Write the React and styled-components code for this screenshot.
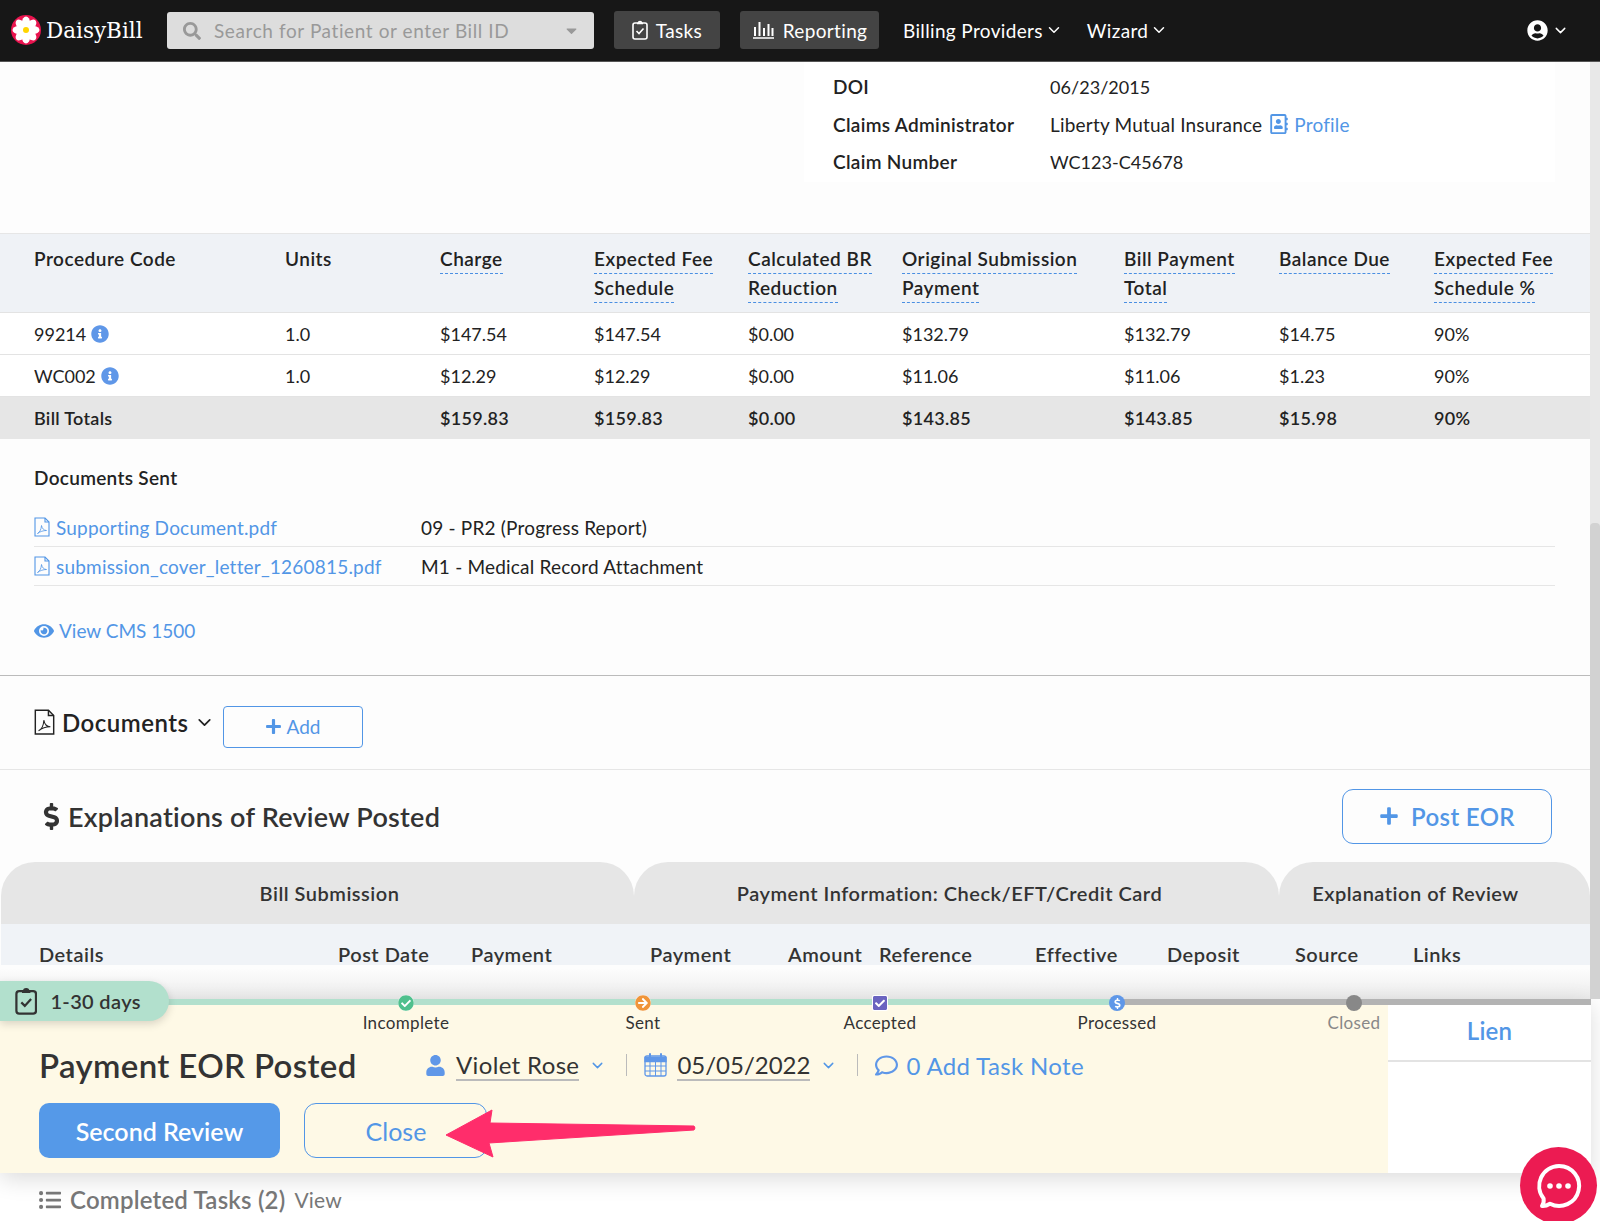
import React from 'react'
import styled, { createGlobalStyle } from 'styled-components'
import {
  FaSearch, FaCaretDown, FaEye, FaPlus, FaUser, FaRegComment,
  FaInfoCircle, FaListUl, FaUserCircle, FaCheckCircle, FaArrowCircleRight,
  FaCheckSquare, FaDollarSign, FaRegAddressBook
} from 'react-icons/fa'
import { LuChevronDown } from 'react-icons/lu'

const blue = '#5296e6'
const font = 'Lato, "Open Sans", sans-serif'

const Global = createGlobalStyle`
  html, body { margin: 0; padding: 0; background: #fff; }
  body {
    font-family: ${font};
    font-size: 19px;
    color: #222;
    letter-spacing: 0.2px;
  }
  * { box-sizing: border-box; }
`

const Frame = styled.div`
  width: 1600px;
  height: 100vh;
  display: flex;
  flex-direction: column;
  overflow: hidden;
`

const Header = styled.header`
  flex: none;
  height: 62px;
  display: flex;
  align-items: center;
  padding: 0 31px 1px 11px;
  background: #171717;
  border-bottom: 1px solid #555;
  color: #fff;
  letter-spacing: 0.35px;
`
const Logo = styled.div`
  width: 156px;
  display: flex;
  align-items: center;
  gap: 5px;
  font-family: "DejaVu Serif", serif;
  font-size: 21.5px;
  letter-spacing: 0;
`
const Search = styled.div`
  width: 427px;
  height: 37px;
  display: flex;
  align-items: center;
  padding: 1px 14px 0 16px;
  background: #ddd;
  border-radius: 3px;
  color: #999;
  letter-spacing: 0.6px;
  svg:first-child { font-size: 18px; margin-right: 13px; }
  svg:last-child { margin-left: auto; font-size: 17px; }
`
const NavButton = styled.div`
  width: ${p => p.$w}px;
  height: 38px;
  margin-left: 20px;
  display: flex;
  align-items: center;
  justify-content: center;
  gap: 8px;
  background: #444;
  border-radius: 3px;
`
const NavLink = styled.div`
  margin-left: ${p => p.$ml}px;
  display: flex;
  align-items: center;
  gap: 2px;
  svg { font-size: 18px; }
`
const UserMenu = styled.div`
  margin-left: auto;
  display: flex;
  align-items: center;
  gap: 4px;
  svg:first-child { font-size: 21px; }
  svg:last-child { font-size: 17px; }
`

const Content = styled.div`
  flex: none;
  height: 903px;
  display: flex;
  overflow: hidden;
  background: #fdfdfd;
`
const Main = styled.main`
  width: 1590px;
  flex: none;
`
const ScrollTrack = styled.div`
  width: 10px;
  flex: none;
  display: flex;
  flex-direction: column;
  background: #e8e8e8;
`
const ScrollThumb = styled.div`
  margin-top: 461px;
  flex: 1;
  background: #d2d2d2;
  border-radius: 4px 4px 0 0;
`

const TopBlock = styled.div`
  height: 171px;
  padding-left: 804px;
`
const InfoCard = styled.div`
  width: 751px;
  height: 120px;
  padding: 6px 0 0 29px;
  background: #fff;
`
const InfoRow = styled.div`
  height: 37.5px;
  display: flex;
  align-items: center;
`
const InfoLabel = styled.div`
  width: 217px;
  font-weight: 600;
  letter-spacing: 0.3px;
`
const Num = styled.span`
  font-size: 18px;
  letter-spacing: 0.05px;
`
const InlineLink = styled.span`
  display: inline-flex;
  align-items: center;
  gap: 5px;
  margin-left: 7px;
  color: ${blue};
  svg { font-size: 20px; }
`

const Row = styled.div`
  display: grid;
  grid-template-columns: 251px 155px 154px 154px 154px 222px 155px 155px 1fr;
  padding-left: 34px;
  align-items: center;
  height: 42px;
  background: #fff;
  border-bottom: 1px solid #e3e3e3;
  font-size: 18px;
  letter-spacing: 0;
`
const HeadRow = styled(Row)`
  height: 80px;
  align-items: start;
  padding-top: 10px;
  line-height: 29px;
  background: #eff2f6;
  border-top: 1px solid #e6e6e6;
  font-size: 19px;
  font-weight: 600;
  letter-spacing: 0.5px;
`
const TotalRow = styled(Row)`
  background: #e6e6e6;
  border-bottom: none;
  font-weight: 600;
  letter-spacing: 0.3px;
`
const Dashed = styled.span`
  padding-bottom: 3px;
  border-bottom: 1px dashed #4a8fe2;
`
const CodeCell = styled.div`
  display: flex;
  align-items: center;
  gap: 5px;
  svg { color: #5f97e8; font-size: 18px; }
`

const DocsSent = styled.section`
  height: 237px;
  padding: 28px 35px 0 34px;
  border-bottom: 1px solid #bbb;
`
const DocsLabel = styled.div`
  font-weight: 600;
  letter-spacing: 0.3px;
  margin-bottom: 19px;
  line-height: 22px;
`
const DocRow = styled.div`
  height: 39px;
  display: flex;
  align-items: center;
  border-bottom: 1px solid #e6e6e6;
`
const DocLink = styled.div`
  width: 387px;
  display: flex;
  align-items: center;
  gap: 6px;
  color: ${blue};
`
const ViewLink = styled.div`
  margin-top: 33px;
  display: flex;
  align-items: center;
  gap: 5px;
  color: ${blue};
  letter-spacing: 0;
  svg { font-size: 20px; }
`

const DocsBar = styled.section`
  height: 94px;
  padding: 0 0 0 34px;
  display: flex;
  align-items: center;
  border-bottom: 1px solid #e6e6e6;
`
const BarTitle = styled.h2`
  margin: 0;
  display: flex;
  align-items: center;
  gap: 7px;
  font-size: 24px;
  font-weight: 600;
  letter-spacing: 0.5px;
  color: #222;
  svg:last-child { font-size: 21px; margin-left: -2px; }
`
const AddButton = styled.button`
  width: 140px;
  height: 42px;
  margin: 8px 0 0 8px;
  display: flex;
  align-items: center;
  justify-content: center;
  gap: 5px;
  background: transparent;
  border: 1px solid ${blue};
  border-radius: 4px;
  color: ${blue};
  font: 400 19px ${font};
  svg { font-size: 17px; }
`

const EorBar = styled.section`
  height: 92px;
  padding: 0 38px 0 38px;
  display: flex;
  align-items: center;
  justify-content: space-between;
`
const EorTitle = styled.h2`
  margin: 0;
  display: flex;
  align-items: center;
  gap: 3px;
  font-size: 27px;
  font-weight: 600;
  letter-spacing: 0.25px;
  color: #333;
`
const PostButton = styled.button`
  width: 210px;
  height: 55px;
  display: flex;
  align-items: center;
  justify-content: center;
  gap: 12px;
  background: transparent;
  border: 1.5px solid ${blue};
  border-radius: 11px;
  color: ${blue};
  font: 600 24px ${font};
  letter-spacing: 0.35px;
  svg { font-size: 20px; }
`

const Groups = styled.div`
  display: flex;
  padding-left: 1px;
`
const Group = styled.div`
  width: ${p => p.$w}px;
  flex: none;
  & + & > div:last-child { border-left: 1px solid #d9d9d9; }
`
const GroupHead = styled.div`
  height: 62px;
  display: flex;
  align-items: center;
  justify-content: center;
  padding: 0 ${p => p.$r || 0}px 0 ${p => p.$l || 0}px;
  background: #e6e6e6;
  border-radius: 34px 34px 0 0;
  font-size: 20px;
  font-weight: 600;
  letter-spacing: 0.5px;
  color: #333;
`
const SubRow = styled.div`
  height: 60px;
  display: flex;
  padding: 18px 0 0 ${p => p.$l}px;
  background: #f0f3f7;
  font-size: 20px;
  font-weight: 600;
  letter-spacing: 0.5px;
  line-height: 24px;
  color: #333;
`
const SubCell = styled.div`
  width: ${p => p.$w}px;
  flex: none;
`

const Dock = styled.div`
  position: relative;
  flex: 1;
  background: #fff;
`
const Fade = styled.div`
  height: 34px;
  display: flex;
  justify-content: flex-end;
  background: linear-gradient(#fdfdfd 10%, #ececec);
`
const FadeTrack = styled.div`
  width: 10px;
  background: #d2d2d2;
`
const Panel = styled.div`
  width: 1591px;
  box-shadow: 0 6px 22px rgba(0, 0, 0, 0.14);
`
const Track = styled.div`
  height: 6px;
  background: linear-gradient(to right, #b2e0cd 1122px, #b3b3b3 1122px);
`
const PanelBody = styled.div`
  display: flex;
  height: 168px;
`
const TaskPane = styled.div`
  width: 1388px;
  padding: 0 0 15px 39px;
  background: #fef9e6;
`
const Stages = styled.div`
  height: 39px;
  margin-top: -10px;
  padding-left: 248.5px;
  display: flex;
  position: relative;
`
const Stage = styled.div`
  width: 237px;
  flex: none;
  display: flex;
  flex-direction: column;
  align-items: center;
  font-size: 17px;
  line-height: 22px;
  letter-spacing: 0.35px;
  color: ${p => p.$muted ? '#888' : '#333'};
`
const Dot = styled.div`
  width: 16px;
  height: 16px;
  flex: none;
  margin-bottom: 1px;
  display: flex;
  align-items: center;
  justify-content: center;
  border-radius: ${p => p.$square ? '2px' : '50%'};
  background: ${p => p.$bg};
  color: ${p => p.$fg};
  font-size: ${p => p.$size || 16}px;
`
const TitleRow = styled.div`
  height: 40px;
  margin-top: 11px;
  display: flex;
  align-items: center;
`
const TaskTitle = styled.h1`
  width: 386px;
  flex: none;
  margin: 0;
  font-size: 33px;
  font-weight: 600;
  letter-spacing: 0.35px;
  color: #333;
`
const Meta = styled.div`
  display: flex;
  align-items: center;
  gap: 10px;
  font-size: 24px;
  letter-spacing: ${p => p.$tight ? 0 : 0.35}px;
  color: #333;
  & > svg:first-child { color: #5f97e8; }
`
const Underlined = styled.span`
  border-bottom: 2px solid #bbb;
  line-height: 29px;
`
const Chevron = styled(LuChevronDown)`
  color: ${blue};
  font-size: 17px;
`
const Divider = styled.div`
  width: 1px;
  height: 22px;
  margin: 0 17px 0 20px;
  background: #bbb;
`
const NoteLink = styled(Meta)`
  gap: 8px;
  color: ${blue};
`
const Actions = styled.div`
  display: flex;
  gap: 24px;
  margin-top: 18px;
`
const PrimaryButton = styled.button`
  width: 241px;
  height: 55px;
  background: #5599e8;
  border: none;
  border-radius: 10px;
  color: #fff;
  font: 600 25px ${font};
`
const GhostButton = styled.button`
  width: 183px;
  height: 55px;
  padding-right: 5px;
  background: transparent;
  border: 1.5px solid ${blue};
  border-radius: 12px;
  color: ${blue};
  font: 400 25px ${font};
`
const LienPane = styled.div`
  flex: 1;
  height: 57px;
  display: flex;
  align-items: center;
  justify-content: center;
  padding-bottom: 4px;
  border-bottom: 2px solid #e3e3e3;
  color: ${blue};
  font-size: 24px;
  font-weight: 600;
`
const Completed = styled.div`
  height: 48px;
  padding: 5px 0 0 39px;
  display: flex;
  align-items: center;
  gap: 9px;
  color: #777;
  font-size: 24px;
  font-weight: 600;
  svg { font-size: 22px; }
  span { font-size: 21px; font-weight: 400; }
`
const Pill = styled.div`
  position: absolute;
  left: 0;
  top: 16px;
  width: 169px;
  height: 40px;
  padding-left: 15px;
  display: flex;
  align-items: center;
  gap: 13px;
  background: #b2e0cd;
  border-radius: 0 22px 22px 0;
  box-shadow: 0 3px 8px rgba(0, 0, 0, 0.15);
  font-size: 20px;
  font-weight: 600;
  letter-spacing: 0.35px;
  color: #333;
`
const Annotation = styled.svg`
  position: absolute;
  left: 440px;
  top: 140px;
`
const ChatBubble = styled.div`
  position: absolute;
  left: 1520px;
  top: 182px;
  width: 77px;
  height: 77px;
  display: flex;
  align-items: center;
  justify-content: center;
  border-radius: 50%;
  background: #ec1b52;
`

const Flower = () => (
  <svg width="30" height="30" viewBox="0 0 30 30">
    <circle cx="15" cy="15" r="15" fill="#e8134e" />
    {[0, 45, 90, 135, 180, 225, 270, 315].map(a => (
      <ellipse key={a} cx="15" cy="7.5" rx="4" ry="6" fill="#fff" transform={`rotate(${a} 15 15)`} />
    ))}
    <circle cx="15" cy="15" r="3" fill="#ffd500" />
  </svg>
)

const Clipboard = ({ size = 20 }) => (
  <svg width={size * 0.8} height={size} viewBox="0 0 16 20" fill="none" stroke="currentColor" strokeWidth="1.6">
    <rect x="1" y="3" width="14" height="16" rx="2" />
    <path d="M5 3.5h6M6.5 3c0-2 3-2 3 0" />
    <path d="M4.5 11l2.5 2.5 4.5-5" />
  </svg>
)

const Bars = () => (
  <svg width="23" height="20" viewBox="0 0 23 20" fill="none" stroke="currentColor" strokeWidth="2">
    <path d="M1 18h21" strokeWidth="1.5" />
    <path d="M3 16V7M7.5 16V2M12 16V8M16.5 16V4M20.5 16V8" />
  </svg>
)

const Calendar = () => (
  <svg width="23" height="24" viewBox="0 0 23 24" fill="none" stroke="#5f97e8" strokeWidth="1.3">
    <rect x="1" y="3" width="21" height="20" rx="2" />
    <path d="M1 4.5h21v4H1z" fill="#5f97e8" />
    <path d="M6 1v5M17 1v5" strokeWidth="2" strokeLinecap="round" />
    <path d="M1 13h21M1 18h21M6 8v15M11.5 8v15M17 8v15" strokeWidth="1" />
  </svg>
)

const PdfIcon = ({ w = 16 }) => (
  <svg width={w} height={w * 1.25} viewBox="0 0 16 20" fill="none" stroke="currentColor" strokeWidth="1.1" style={{ flex: 'none' }}>
    <path d="M1 1h10l4 4v14H1z" />
    <path d="M11 1v4h4" />
    <path d="M3.5 16.5c2-1 3.800-4 4-8 .5 3 2.500 5 5 5-3 0-6.500 1-9 3z" strokeWidth="0.8" />
  </svg>
)

const headers = [
  ['Charge'], ['Expected Fee', 'Schedule'], ['Calculated BR', 'Reduction'],
  ['Original Submission', 'Payment'], ['Bill Payment', 'Total'], ['Balance Due'],
  ['Expected Fee', 'Schedule %']
]
const rows = [
  { code: '99214', values: ['$147.54', '$147.54', '$0.00', '$132.79', '$132.79', '$14.75', '90%'] },
  { code: 'WC002', values: ['$12.29', '$12.29', '$0.00', '$11.06', '$11.06', '$1.23', '90%'] }
]
const totals = ['$159.83', '$159.83', '$0.00', '$143.85', '$143.85', '$15.98', '90%']

const App = () => (
  <Frame>
    <Global />
    <Header>
      <Logo><Flower />DaisyBill</Logo>
      <Search>
        <FaSearch />
        Search for Patient or enter Bill ID
        <FaCaretDown />
      </Search>
      <NavButton $w={106}><Clipboard />Tasks</NavButton>
      <NavButton $w={139}><Bars />Reporting</NavButton>
      <NavLink $ml={24}>Billing Providers <LuChevronDown /></NavLink>
      <NavLink $ml={24}>Wizard <LuChevronDown /></NavLink>
      <UserMenu><FaUserCircle /><LuChevronDown /></UserMenu>
    </Header>

    <Content>
      <Main>
        <TopBlock>
          <InfoCard>
            <InfoRow><InfoLabel>DOI</InfoLabel><Num>06/23/2015</Num></InfoRow>
            <InfoRow>
              <InfoLabel>Claims Administrator</InfoLabel>
              Liberty Mutual Insurance
              <InlineLink><FaRegAddressBook />Profile</InlineLink>
            </InfoRow>
            <InfoRow><InfoLabel>Claim Number</InfoLabel><Num>WC123-C45678</Num></InfoRow>
          </InfoCard>
        </TopBlock>

        <HeadRow>
          <div>Procedure Code</div>
          <div>Units</div>
          {headers.map(h => (
            <div key={h.join()}>
              <Dashed>{h[0]}</Dashed>
              {h[1] && <><br /><Dashed>{h[1]}</Dashed></>}
            </div>
          ))}
        </HeadRow>
        {rows.map(r => (
          <Row key={r.code}>
            <CodeCell>{r.code} <FaInfoCircle /></CodeCell>
            <div>1.0</div>
            {r.values.map((v, i) => <div key={i}>{v}</div>)}
          </Row>
        ))}
        <TotalRow>
          <div>Bill Totals</div>
          <div />
          {totals.map((v, i) => <div key={i}>{v}</div>)}
        </TotalRow>

        <DocsSent>
          <DocsLabel>Documents Sent</DocsLabel>
          <DocRow>
            <DocLink><PdfIcon />Supporting Document.pdf</DocLink>
            09 - PR2 (Progress Report)
          </DocRow>
          <DocRow>
            <DocLink><PdfIcon />submission_cover_letter_1260815.pdf</DocLink>
            M1 - Medical Record Attachment
          </DocRow>
          <ViewLink><FaEye />View CMS 1500</ViewLink>
        </DocsSent>

        <DocsBar>
          <BarTitle><PdfIcon w={21} />Documents<LuChevronDown /></BarTitle>
          <AddButton><FaPlus />Add</AddButton>
        </DocsBar>

        <EorBar>
          <EorTitle><FaDollarSign />Explanations of Review Posted</EorTitle>
          <PostButton><FaPlus />Post EOR</PostButton>
        </EorBar>

        <Groups>
          <Group $w={633}>
            <GroupHead $l={24}>Bill Submission</GroupHead>
            <SubRow $l={38}>
              <SubCell $w={299}>Details</SubCell>
              <SubCell $w={133}>Post Date</SubCell>
              <SubCell>Payment</SubCell>
            </SubRow>
          </Group>
          <Group $w={645}>
            <GroupHead $r={14}>Payment Information: Check/EFT/Credit Card</GroupHead>
            <SubRow $l={16}>
              <SubCell $w={138}>Payment</SubCell>
              <SubCell $w={91}>Amount</SubCell>
              <SubCell $w={156}>Reference</SubCell>
              <SubCell $w={132}>Effective</SubCell>
              <SubCell>Deposit</SubCell>
            </SubRow>
          </Group>
          <Group $w={311}>
            <GroupHead $r={38}>Explanation of Review</GroupHead>
            <SubRow $l={16}>
              <SubCell $w={118}>Source</SubCell>
              <SubCell>Links</SubCell>
            </SubRow>
          </Group>
        </Groups>
      </Main>
      <ScrollTrack><ScrollThumb /></ScrollTrack>
    </Content>

    <Dock>
      <Fade><FadeTrack /></Fade>
      <Panel>
        <Track />
        <PanelBody>
          <TaskPane>
            <Stages>
              <Stage>
                <Dot $bg="#fff" $fg="#4fc08d"><FaCheckCircle /></Dot>
                Incomplete
              </Stage>
              <Stage>
                <Dot $bg="#fff" $fg="#f0953a"><FaArrowCircleRight /></Dot>
                Sent
              </Stage>
              <Stage>
                <Dot $square $bg="#fff" $fg="#6a64c0"><FaCheckSquare /></Dot>
                Accepted
              </Stage>
              <Stage>
                <Dot $bg="#5f97e8" $fg="#fff" $size={11}><FaDollarSign /></Dot>
                Processed
              </Stage>
              <Stage $muted>
                <Dot $bg="#888" />
                Closed
              </Stage>
            </Stages>
            <TitleRow>
              <TaskTitle>Payment EOR Posted</TaskTitle>
              <Meta>
                <FaUser size={21} />
                <Underlined>Violet Rose</Underlined>
                <Chevron />
              </Meta>
              <Divider />
              <Meta $tight>
                <Calendar />
                <Underlined>05/05/2022</Underlined>
                <Chevron />
              </Meta>
              <Divider />
              <NoteLink><FaRegComment size={23} />0 Add Task Note</NoteLink>
            </TitleRow>
            <Actions>
              <PrimaryButton>Second Review</PrimaryButton>
              <GhostButton>Close</GhostButton>
            </Actions>
          </TaskPane>
          <LienPane>Lien</LienPane>
        </PanelBody>
      </Panel>
      <Completed>
        <FaListUl />Completed Tasks (2) <span>View</span>
      </Completed>

      <Pill><Clipboard size={28} />1-30 days</Pill>
      <Annotation width="260" height="60" viewBox="0 0 260 60">
        <path d="M6 30 L52 5 L50 18 L254 21 Q256 23 254 25 L49 38 L53 52 Z" fill="#ff2d6b" stroke="#ff2d6b" strokeLinejoin="round" />
      </Annotation>
      <ChatBubble>
        <svg width="50" height="50" viewBox="0 0 50 50" fill="none">
          <path d="M25 5a20 20 0 1 1-9 37.8c-2.500 1.500-5.500 2.500-8 2.200 1.500-2 2-4.500 1.600-7.500A20 20 0 0 1 25 5z" stroke="#fff" strokeWidth="4" strokeLinejoin="round" />
          <circle cx="16" cy="25" r="2.8" fill="#fff" />
          <circle cx="25" cy="25" r="2.8" fill="#fff" />
          <circle cx="34" cy="25" r="2.8" fill="#fff" />
        </svg>
      </ChatBubble>
    </Dock>
  </Frame>
)

export default App
